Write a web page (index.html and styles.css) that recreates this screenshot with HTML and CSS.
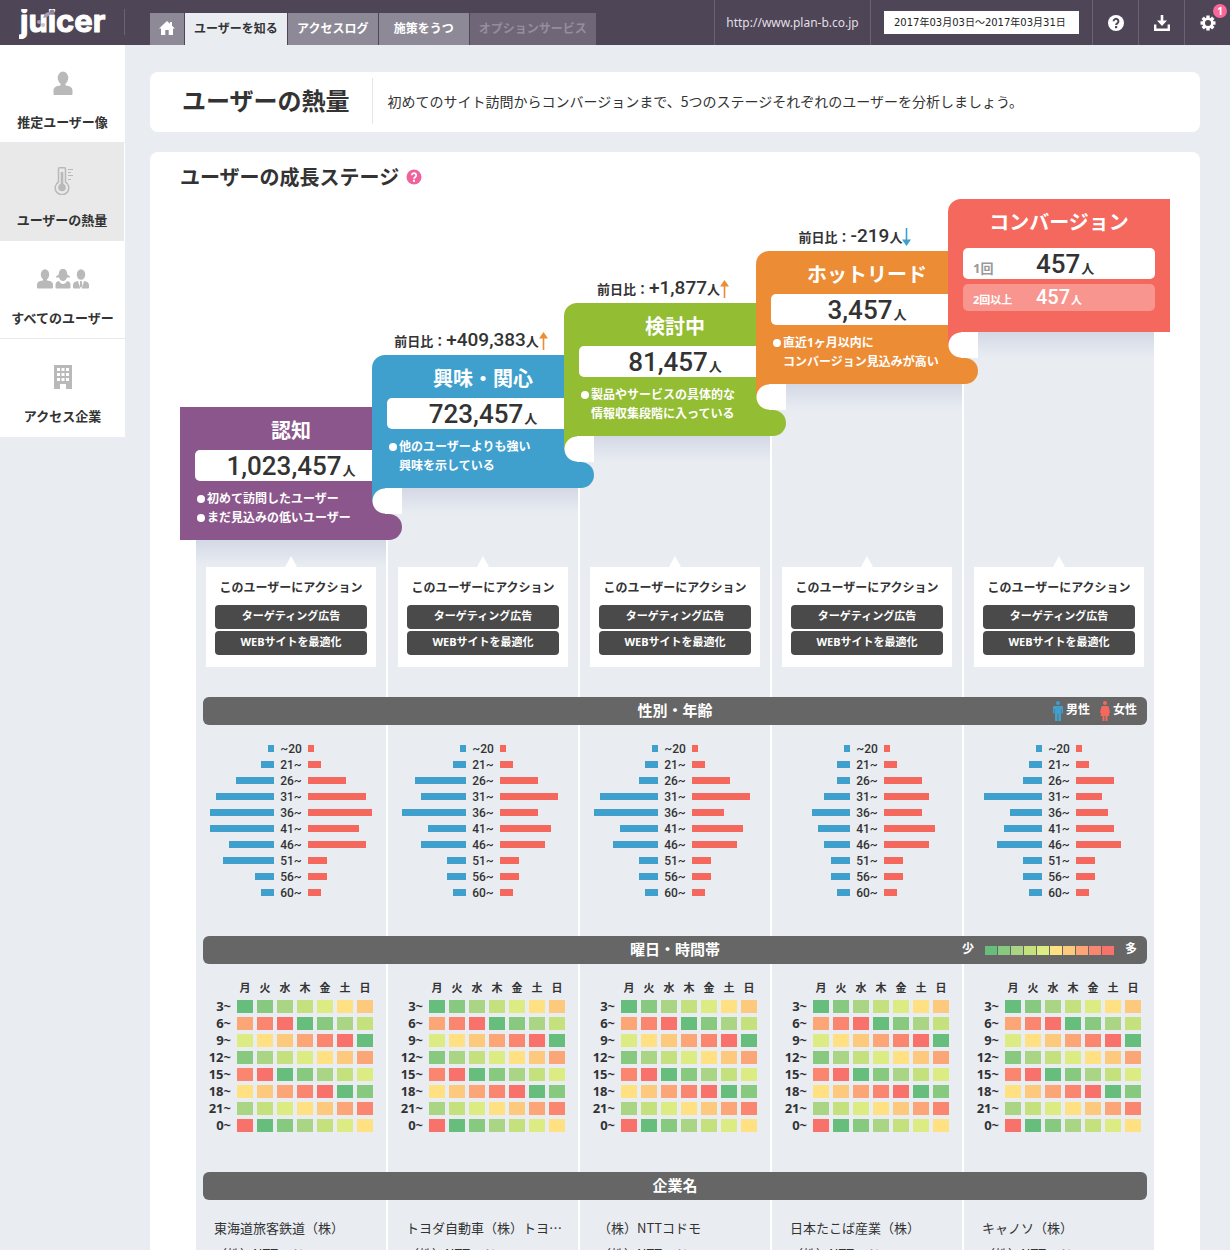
FILE: index.html
```html
<!DOCTYPE html>
<html lang="ja">
<head>
<meta charset="utf-8">
<meta name="viewport" content="width=device-width, initial-scale=1">
<title>ユーザーの熱量 | juicer</title>
<link rel="stylesheet" href="styles.css">
</head>
<body>
<header class="topbar">
  <a class="logo" href="#" aria-label="juicer">
    <svg width="96" height="36" viewBox="0 0 96 36" aria-hidden="true">
      <text class="logo-text" x="1" y="23">juicer</text>
      <path d="M24 9q2-7 7-6 1 5-7 6z" fill="#a79db0"/>
      <circle cx="33" cy="3" r="2.500" fill="#8f8399"/>
      <circle cx="20" cy="13" r="2" fill="#a79db0"/>
      <circle cx="24" cy="16" r="2" fill="#c9c2cf"/>
    </svg>
  </a>
  <nav class="tabs">
    <a class="tab tab-home" href="#" aria-label="ホーム">
      <svg width="16" height="14" viewBox="0 0 16 14" fill="#fff"><path d="M8 0L0 7.500h2V14h4.300V9h3.400v5H14V7.500h2L13 4.700V1h-2v1.800z"/></svg>
    </a>
    <a class="tab is-active" href="#">ユーザーを知る</a>
    <a class="tab" href="#">アクセスログ</a>
    <a class="tab" href="#">施策をうつ</a>
    <a class="tab is-disabled" href="#">オプションサービス</a>
  </nav>
  <div class="tools">
    <a class="site-url" href="#">http://www.plan-b.co.jp</a>
    <div class="period"><input type="text" aria-label="期間" value="2017年03月03日～2017年03月31日"></div>
    <button class="tool" type="button" aria-label="ヘルプ">
      <svg width="16" height="16" viewBox="0 0 16 16"><circle cx="8" cy="8" r="8" fill="#fff"/><path d="M5.600 6.300a2.400 2.400 0 1 1 3.800 1.900C8.500 8.800 8.100 9 8.100 10" fill="none" stroke="#4e4556" stroke-width="2"/><rect x="7" y="11" width="2.200" height="2.200" fill="#4e4556"/></svg>
    </button>
    <button class="tool" type="button" aria-label="ダウンロード">
      <svg width="16" height="16" viewBox="0 0 16 16"><path d="M1.200 9.500v5.300h13.600V9.500" fill="none" stroke="#fff" stroke-width="2.400"/><path d="M6.700 0h2.600v5.500H13L8 11 3 5.500h3.700z" fill="#fff"/></svg>
    </button>
    <button class="tool" type="button" aria-label="設定">
      <svg width="16" height="16" viewBox="-8 -8 16 16"><g fill="#fff"><rect x="-1.700" y="-7.500" width="3.400" height="15"/><rect x="-1.700" y="-7.500" width="3.400" height="15" transform="rotate(45)"/><rect x="-1.700" y="-7.500" width="3.400" height="15" transform="rotate(90)"/><rect x="-1.700" y="-7.500" width="3.400" height="15" transform="rotate(135)"/><circle r="5.600"/></g><circle r="3" fill="#4e4556"/></svg>
      <span class="badge">1</span>
    </button>
  </div>
</header>

<div class="shell">
  <nav class="sidebar">
    <a class="side-item" href="#">
      <svg width="20" height="24" viewBox="0 0 20 24" fill="#b9b9b9"><ellipse cx="10" cy="7" rx="5.300" ry="6.500"/><path d="M7.500 11h5v3.500c5 .5 7 2 7 5.500v3q0 1-1 1h-17q-1 0-1-1v-3c0-3.500 2-5 7-5.500z"/></svg>
      <span>推定ユーザー像</span>
    </a>
    <a class="side-item is-active" href="#">
      <svg width="24" height="28" viewBox="-3 0 24 28" fill="none" stroke="#b9b9b9"><path d="M5.500 15V1.800q0-1 1-1h5q1 0 1 1V15a6.800 6.800 0 1 1-7 0z" stroke-width="1.500"/><path d="M9 5v13" stroke-width="2.600"/><circle cx="9" cy="20.500" r="3.800" fill="#b9b9b9" stroke="none"/><path d="M15 2.500h5M15 5.500h3M15 8.500h5M15 12.500h3" stroke-width="1"/></svg>
      <span>ユーザーの熱量</span>
    </a>
    <a class="side-item" href="#">
      <svg width="52" height="20" viewBox="0 0 52 20" fill="#b9b9b9"><ellipse cx="8" cy="5.500" rx="4.200" ry="5.300"/><path d="M6 9h4v2.500c4 .5 6 1.500 6 4.500v2.500q0 1-1 1H1q-1 0-1-1V16c0-3 2-4 6-4.500z"/><path d="M26 0c3.500 0 4 2.500 4.300 5.500L33 7.500v1h-3c-.5 1.800-2 3.500-4 3.500s-3.500-1.700-4-3.500h-3v-1l2.700-2C22 2.500 22.500 0 26 0z"/><path d="M22 12c1 2 2.500 3 4 3s3-1 4-3c2.500.5 3.500 1.500 3.500 4v2.500q0 1-1 1h-13q-1 0-1-1V16c0-2.500 1-3.500 3.500-4z"/><ellipse cx="44" cy="5.500" rx="4.200" ry="5.300"/><path d="M41 12l2.200 7.500H37q-1 0-1-1V16c0-2.500 2-3.500 5-4zM47 12l-2.200 7.500H51q1 0 1-1V16c0-2.500-2-3.500-5-4zM43.200 12h1.600l.5 5-1.300 2-1.300-2z"/></svg>
      <span>すべてのユーザー</span>
    </a>
    <a class="side-item" href="#">
      <svg width="18" height="24" viewBox="0 0 18 24"><path d="M0 0h18v24h-6v-5H6v5H0z" fill="#b9b9b9"/><path d="M3 3h3v3H3zM7.500 3h3v3h-3zM12 3h3v3h-3zM3 8h3v3H3zM7.500 8h3v3h-3zM12 8h3v3h-3zM3 13h3v3H3zM7.500 13h3v3h-3zM12 13h3v3h-3z" fill="#fff"/></svg>
      <span>アクセス企業</span>
    </a>
  </nav>

  <main class="content">
    <section class="panel intro">
      <h1>ユーザーの熱量</h1>
      <p>初めてのサイト訪問からコンバージョンまで、5つのステージそれぞれのユーザーを分析しましょう。</p>
    </section>

    <section class="panel growth">
      <h2>ユーザーの成長ステージ
        <svg width="16" height="16" viewBox="0 0 16 16"><circle cx="8" cy="8" r="7.500" fill="#f0629b"/><path d="M5.800 6.300a2.200 2.200 0 1 1 3.500 1.800C8.400 8.700 8 8.900 8 9.800" fill="none" stroke="#fff" stroke-width="1.800"/><rect x="7" y="10.800" width="2" height="2" fill="#fff"/></svg>
      </h2>

      <div class="stairs">
        <article class="stage stage-1">
          <div class="card">
            <h3>認知</h3>
            <p class="count"><b>1,023,457</b>人</p>
            <ul><li>初めて訪問したユーザー</li><li>まだ見込みの低いユーザー</li></ul>
          </div>
          <div class="riser"></div>
        </article>
        <article class="stage stage-2">
          <p class="delta">前日比：<b>+409,383</b>人<svg width="9" height="18" viewBox="0 0 9 18" fill="#ec8c35"><path d="M4.500 0L9 6.500H5.300V18H3.700V6.500H0z"/></svg></p>
          <div class="card">
            <h3>興味・関心</h3>
            <p class="count"><b>723,457</b>人</p>
            <ul><li>他のユーザーよりも強い<br>興味を示している</li></ul>
          </div>
          <div class="riser"></div>
        </article>
        <article class="stage stage-3">
          <p class="delta">前日比：<b>+1,877</b>人<svg width="9" height="18" viewBox="0 0 9 18" fill="#ec8c35"><path d="M4.500 0L9 6.500H5.300V18H3.700V6.500H0z"/></svg></p>
          <div class="card">
            <h3>検討中</h3>
            <p class="count"><b>81,457</b>人</p>
            <ul><li>製品やサービスの具体的な<br>情報収集段階に入っている</li></ul>
          </div>
          <div class="riser"></div>
        </article>
        <article class="stage stage-4">
          <p class="delta">前日比：<b>-219</b>人<svg width="9" height="18" viewBox="0 0 9 18" fill="#3fa0ce"><path d="M4.500 18L9 11.500H5.300V0H3.700v11.500H0z"/></svg></p>
          <div class="card">
            <h3>ホットリード</h3>
            <p class="count"><b>3,457</b>人</p>
            <ul><li>直近1ヶ月以内に<br>コンバージョン見込みが高い</li></ul>
          </div>
          <div class="riser"></div>
        </article>
        <article class="stage stage-5">
          <div class="card">
            <h3>コンバージョン</h3>
            <p class="count split"><span>1回</span><span><b>457</b>人</span></p>
            <p class="count split repeat"><span>2回以上</span><span><b>457</b>人</span></p>
          </div>
          <div class="riser"></div>
        </article>
      </div>

      <div class="analysis">
        <div class="bar">
          <h3>性別・年齢</h3>
          <div class="legend">
            <svg width="10" height="20" viewBox="0 0 10 20" fill="#3fa0ce"><circle cx="5" cy="2" r="2"/><path d="M1 5h8q1 0 1 1v6.500H8.600V8H8v12H5.400v-7h-.8v7H2V8h-.6v4.500H0V6q0-1 1-1z"/></svg>
            <span>男性</span>
            <svg width="10" height="20" viewBox="0 0 10 20" fill="#f5685e"><circle cx="5" cy="2" r="2"/><path d="M2.500 5h5q1 0 1.300 1L10 12l-1.200.4.7 2.600H7.500v5h-2v-5h-1v5h-2v-5H.5l.7-2.600L0 12l1.200-6q.3-1 1.300-1z"/></svg>
            <span>女性</span>
          </div>
        </div>
        <div class="columns" id="pyramids"></div>

        <div class="bar">
          <h3>曜日・時間帯</h3>
          <div class="legend scale">
            <span>少</span>
            <ol><li class="l0"></li><li class="l1"></li><li class="l2"></li><li class="l3"></li><li class="l4"></li><li class="l5"></li><li class="l6"></li><li class="l7"></li><li class="l8"></li><li class="l9"></li></ol>
            <span>多</span>
          </div>
        </div>
        <div class="columns" id="heatmaps"></div>

        <div class="bar"><h3>企業名</h3></div>
        <div class="columns companies">
          <ul><li>東海道旅客鉄道（株）</li><li>（株）NTTコドモ</li></ul>
          <ul><li>トヨダ自動車（株）トヨ…</li><li>（株）NTTコドモ</li></ul>
          <ul><li>（株）NTTコドモ</li><li>（株）NTTコドモ</li></ul>
          <ul><li>日本たこば産業（株）</li><li>（株）NTTコドモ</li></ul>
          <ul><li>キャノソ（株）</li><li>（株）NTTコドモ</li></ul>
        </div>
      </div>
    </section>
  </main>
</div>
<script src="app.js"></script>
</body>
</html>
```

FILE: styles.css
```css
:root {
  --ink: #333;
  --bar: #4e4556;
  --bg: #e9edf2;
  --blue: #3fa0ce;
  --red: #f5685e;
}

* { box-sizing: border-box; }

body, h1, h2, h3, p, ul, ol { margin: 0; padding: 0; }
ul, ol { list-style: none; }
a { color: inherit; text-decoration: none; }
button { border: 0; padding: 0; background: none; font: inherit; color: inherit; cursor: pointer; }
svg { display: block; flex: none; }

body {
  display: flex;
  flex-direction: column;
  height: 100vh;
  overflow: hidden;
  background: var(--bg);
  color: var(--ink);
  font-family: "Noto Sans", "Noto Sans CJK JP", sans-serif;
  font-size: 12px;
}

/* Header */
.topbar {
  display: flex;
  flex: none;
  height: 45px;
  background: var(--bar);
  color: #fff;
}
.logo {
  width: 125px;
  height: 26px;
  margin: 9px 25px 0 0;
  padding-left: 19px;
  border-right: 1px solid #6b6373;
}
.logo-text {
  font-family: Inter, sans-serif;
  font-size: 31px;
  font-weight: 700;
  fill: #fff;
  stroke: #fff;
  stroke-linejoin: round;
}
.tabs {
  display: flex;
  align-items: flex-end;
  gap: 1px;
  font-family: "Noto Sans CJK JP", sans-serif;
  font-weight: 700;
}
.tab {
  display: flex;
  align-items: center;
  justify-content: center;
  min-width: 90px;
  height: 32px;
  padding: 0 9px 3px;
  background: #8e8996;
  white-space: nowrap;
}
.tab-home { min-width: 34px; }
.tab.is-active { background: var(--bg); color: var(--ink); }
.tab.is-disabled { background: #6f6777; color: #958f9c; }
.tools { display: flex; margin-left: auto; }
.tools > * { border-left: 1px solid #6b6373; }
.site-url {
  display: flex;
  align-items: center;
  justify-content: center;
  min-width: 156px;
  color: #e2dfe5;
}
.period { padding: 11px 13px; }
.period input {
  width: 195px;
  height: 23px;
  padding: 0 10px 2px;
  border: 0;
  background: #fff;
  color: #222;
  font-family: "DejaVu Sans", "Noto Sans CJK JP", sans-serif;
  font-size: 10px;
}
.tool {
  position: relative;
  display: grid;
  place-items: center;
  width: 46px;
}
.badge {
  position: absolute;
  top: 4px;
  right: 3px;
  width: 14px;
  border-radius: 7px;
  background: #f9679b;
  font-size: 10px;
  font-weight: 700;
  line-height: 14px;
}

/* Frame */
.shell { display: flex; flex: 1; min-height: 0; }
.sidebar {
  flex: none;
  align-self: flex-start;
  width: 125px;
  background: #fff;
  font-family: "Noto Sans CJK JP", sans-serif;
  font-size: 13px;
  font-weight: 700;
}
.side-item {
  display: grid;
  grid-template-rows: 48px 20px;
  row-gap: 5px;
  justify-items: center;
  align-items: center;
  height: 98px;
  padding-top: 14px;
  border-bottom: 1px solid #e6e9ee;
  line-height: 20px;
}
.side-item:last-child { border-bottom: 0; }
.side-item.is-active { margin-right: 1px; background: #e9e9e9; }

.content {
  flex: 1;
  min-width: 0;
  padding: 27px 30px 30px 25px;
  overflow-y: auto;
  scrollbar-width: none;
}
.panel { border-radius: 8px; background: #fff; }

.intro {
  display: flex;
  align-items: center;
  height: 60px;
  margin-bottom: 20px;
  padding: 0 0 2px 32px;
  font-family: "Noto Sans CJK JP", sans-serif;
  font-size: 14px;
}
.intro h1 { padding: 0 22px 2px 0; font-size: 24px; line-height: 46px; }
.intro p {
  padding-left: 15px;
  border-left: 1px solid #e3e6ea;
  line-height: 46px;
}

.growth { padding: 10px 30px 30px; }
.growth h2 {
  display: flex;
  align-items: center;
  gap: 7px;
  margin-bottom: 7px;
  font-size: 20px;
  line-height: 30px;
  font-family: "Noto Sans CJK JP", sans-serif;
}

/* Staircase */
.stairs {
  display: grid;
  grid-template-columns: repeat(5, minmax(0, 1fr));
  align-items: end;
  padding-right: 30px;
}
.stage-1 { --c: #8b568b; --step: 0; }
.stage-2 { --c: var(--blue); --prev: #8b568b; --step: 1; }
.stage-3 { --c: #93bd33; --prev: var(--blue); --step: 2; }
.stage-4 { --c: #ec8c35; --prev: #93bd33; --step: 3; }
.stage-5 { --c: var(--red); --prev: #ec8c35; --step: 4; }

.delta {
  display: flex;
  align-items: baseline;
  justify-content: center;
  padding: 0 0 2px 6px;
  font-size: 13px;
  font-weight: 700;
  line-height: 24px;
  white-space: nowrap;
}
.delta b { font-family: Roboto, sans-serif; font-size: 19px; font-weight: 500; }
.delta svg { align-self: center; }

.card {
  position: relative;
  z-index: 1;
  width: calc(100% + 30px);
  height: 133px;
  padding: 9px 15px 0;
  border-top-left-radius: 13px;
  background: linear-gradient(var(--c), var(--c)) no-repeat 0 0 / calc(100% - 30px) 100%;
  color: #fff;
}
.stage-1 .card { border-radius: 0; }
.stage-5 .card { background-size: 100% 100%; }
.card h3 { margin-bottom: 4px; font-size: 20px; line-height: 30px; text-align: center; }
.stage-5 h3 { margin-bottom: 10px; }

/* Rounded tail that runs under the next step */
.card::after {
  content: "";
  position: absolute;
  right: 0;
  bottom: 0;
  width: 30px;
  height: 26px;
  border-radius: 0 13px 13px 0;
  background: var(--c);
}
.stage-5 .card::after { content: none; }

/* White notch cut into the previous step */
.card::before {
  content: "";
  position: absolute;
  top: 100%;
  left: 0;
  width: 30px;
  height: 26px;
  background:
    radial-gradient(circle at 13px 13px, #fff 12px, transparent 13px) 0 0 / 13px 26px no-repeat,
    linear-gradient(#fff, #fff) 13px 0 / 17px 26px no-repeat,
    linear-gradient(var(--c) 50%, var(--prev) 50%) 0 0 / 13px 26px no-repeat;
}
.stage-1 .card::before { content: none; }

.count {
  height: 31px;
  border-radius: 5px;
  background: #fff;
  color: var(--ink);
  font-size: 13px;
  font-weight: 700;
  line-height: 33px;
  text-align: center;
}
.count b { margin-right: 1px; font-family: Roboto, sans-serif; font-size: 26px; font-weight: 500; }
.count.split {
  display: grid;
  grid-template-columns: 63px 1fr;
  align-items: baseline;
  padding-left: 10px;
  text-align: left;
}
.count.split span:first-child { color: #999; }
.count.repeat {
  height: 27px;
  margin-top: 5px;
  background: rgba(255, 255, 255, .3);
  color: #fff;
  font-size: 11px;
  line-height: 27px;
}
.count.repeat span:first-child { color: #fff; }
.count.repeat b { font-size: 20px; }

.card ul { padding: 8px 0 0 12px; font-weight: 700; line-height: 19px; white-space: nowrap; }
.card li { position: relative; }
.card li::before {
  content: "";
  position: absolute;
  top: 6px;
  left: -10px;
  width: 8px;
  height: 8px;
  border-radius: 50%;
  background: #fff;
}

.riser {
  display: flex;
  flex-direction: column;
  justify-content: flex-end;
  height: calc(157px + 52px * var(--step));
  margin: 0 -14px 0 16px;
  padding: 0 10px 30px;
  background: linear-gradient(#d3d8e5, var(--bg) 26px);
}
.action { position: relative; padding: 11px 9px 12px; background: #fff; text-align: center; }
.action::before {
  content: "";
  position: absolute;
  bottom: 100%;
  left: 50%;
  margin-left: -6px;
  border: 6px solid transparent;
  border-top: 0;
  border-bottom: 11px solid #fff;
}
.action h4 { margin: 0 0 7px; font-size: 12px; line-height: 20px; }
.action button {
  display: block;
  width: 100%;
  height: 24px;
  margin-bottom: 2px;
  padding-bottom: 2px;
  border-radius: 4px;
  background: #4a4a4a;
  color: #fff;
  font-size: 11px;
  font-weight: 700;
  line-height: 22px;
  white-space: nowrap;
}
.action button:last-child { margin: 0; }

/* Analysis rows */
.analysis {
  margin: 0 16px;
  background: repeating-linear-gradient(to right,
    var(--bg) 0 calc((100% - 8px) / 5),
    #fff calc((100% - 8px) / 5) calc((100% + 2px) / 5));
}
.bar {
  display: grid;
  grid-template-columns: 1fr auto 1fr;
  height: 28px;
  margin: 0 7px;
  padding: 0 10px;
  border-radius: 6px;
  background: #666;
  color: #fff;
  font-weight: 700;
}
.bar h3 { grid-column: 2; font-size: 15px; line-height: 26px; }
.legend { display: flex; align-items: center; justify-content: flex-end; gap: 3px; }
.legend span { line-height: 26px; padding-bottom: 2px; }
.legend span + svg { margin-left: 7px; }
.scale { gap: 11px; }
.scale ol { display: flex; gap: 1px; }
.scale li { width: 12px; height: 9px; }

.columns { display: grid; grid-template-columns: repeat(5, minmax(0, 1fr)); gap: 2px; }

.pyramid { padding: 16px 14px 35px; }
.pyramid li {
  display: grid;
  grid-template-columns: 1fr 34px 1fr;
  height: 16px;
  font-family: Roboto, sans-serif;
  font-size: 12px;
  font-weight: 500;
  line-height: 16px;
  text-align: center;
}
.pyramid i { height: 7px; margin-top: 4px; }
.male { justify-self: end; background: var(--blue); }
.female { background: var(--red); }

.heat { padding: 13px 0 36px 4px; }
.heat table { border-spacing: 4px; }
.heat th, .heat td { padding: 0; height: 13px; font-size: 11px; line-height: 13px; }
.heat thead th { height: 15px; line-height: 13px; vertical-align: top; }
.heat tbody th {
  width: 29px;
  padding-right: 2px;
  font-size: 13px;
  text-align: right;
}
.heat td { width: 16px; }

.l0 { background: #67bd7b; }
.l1 { background: #87c97e; }
.l2 { background: #a9d585; }
.l3 { background: #c5e17e; }
.l4 { background: #dcec82; }
.l5 { background: #ffe183; }
.l6 { background: #fdca7d; }
.l7 { background: #fca678; }
.l8 { background: #fa8670; }
.l9 { background: #f8716b; }

.companies { font-family: "Noto Sans CJK JP", sans-serif; font-size: 13px; line-height: 26px; }
.companies ul { padding: 15px 0 30px 18px; }
```

FILE: app.js
```js
const AGES = ['~20', '21~', '26~', '31~', '36~', '41~', '46~', '51~', '56~', '60~'];
const USERS = [
  { male: [1, 2, 6, 9, 10, 10, 7, 8, 3, 2], female: [1, 2, 6, 9, 10, 8, 9, 3, 3, 2] },
  { male: [1, 2, 8, 7, 10, 6, 7, 3, 3, 2], female: [1, 2, 6, 9, 6, 8, 7, 3, 3, 2] },
  { male: [1, 2, 3, 9, 10, 6, 7, 3, 3, 2], female: [1, 2, 6, 9, 5, 8, 7, 3, 3, 2] },
  { male: [1, 2, 2, 4, 6, 5, 4, 3, 3, 2], female: [1, 2, 6, 7, 6, 8, 7, 3, 3, 2] },
  { male: [1, 2, 3, 9, 5, 6, 7, 3, 3, 2], female: [1, 2, 6, 4, 5, 6, 7, 3, 3, 2] },
];
const DAYS = [...'月火水木金土日'];
const HOURS = ['3~', '6~', '9~', '12~', '15~', '18~', '21~', '0~'];

document.getElementById('pyramids').innerHTML = USERS.map(({ male, female }) => `
  <ul class="pyramid">${AGES.map((age, i) => `
    <li><i class="male" style="width:${male[i] * 10}%"></i><span>${age}</span><i class="female" style="width:${female[i] * 10}%"></i></li>`).join('')}
  </ul>`).join('');

const heatRow = (hour, r) =>
  `<tr><th scope="row">${hour}</th>${DAYS.map((_, c) => `<td class="l${(r * 7 + c) % 10}"></td>`).join('')}</tr>`;

document.getElementById('heatmaps').innerHTML = USERS.map(() => `
  <div class="heat"><table>
    <thead><tr><td></td>${DAYS.map(d => `<th scope="col">${d}</th>`).join('')}</tr></thead>
    <tbody>${HOURS.map(heatRow).join('')}</tbody>
  </table></div>`).join('');

document.querySelectorAll('.riser').forEach(riser => {
  riser.innerHTML = `
    <div class="action">
      <h4>このユーザーにアクション</h4>
      <button type="button">ターゲティング広告</button>
      <button type="button">WEBサイトを最適化</button>
    </div>`;
});
```
